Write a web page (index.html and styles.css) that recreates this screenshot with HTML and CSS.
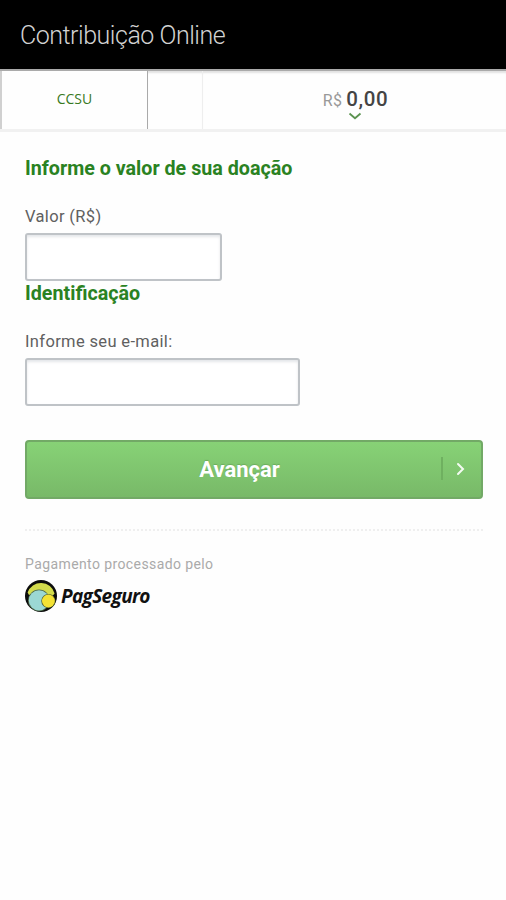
FILE: index.html
```
<!DOCTYPE html>
<html lang="pt-BR">
<head>
    <meta charset="UTF-8">
    <meta name="viewport" content="width=device-width, initial-scale=1.0">
    <title>Contribuição Online</title>
    <link rel="stylesheet" href="styles.css">
</head>
<body>
    <header class="topo">
        <h1>Contribuição Online</h1>
    </header>

    <div class="resumo">
        <div class="loja"><span>CCSU</span></div>
        <div class="espaco"></div>
        <div class="total">
            <div class="preco"><span class="moeda">R$</span> <span class="quantia">0,00</span></div>
            <svg class="seta-baixo" width="14" height="8" viewBox="0 0 14 8">
                <path d="M1.5 1.5 L7 6.2 L12.5 1.5" fill="none" stroke="#5b9350" stroke-width="1.8"/>
            </svg>
        </div>
    </div>

    <form class="conteudo">
        <h2>Informe o valor de sua doação</h2>
        <label class="rotulo-valor" for="valor">Valor (R$)</label>
        <input class="campo campo-valor" type="text" id="valor">

        <h2>Identificação</h2>
        <label class="rotulo-email" for="email">Informe seu e-mail:</label>
        <input class="campo campo-email" type="text" id="email">

        <button class="avancar" type="button">
            <span class="avancar-texto">Avançar</span>
            <span class="avancar-seta">
                <svg width="10" height="14" viewBox="0 0 10 14">
                    <path d="M2 2 L7 7 L2 12" fill="none" stroke="#f4fbf2" stroke-width="2" stroke-linecap="round"/>
                </svg>
            </span>
        </button>
    </form>

    <footer class="rodape">
        <p>Pagamento processado pelo</p>
        <div class="pagseguro">
            <svg width="32" height="32" viewBox="0 0 32 32">
                <circle cx="16" cy="16" r="16" fill="#0c0c0c"/>
                <path d="M2.6 12.5 A14.1 14.1 0 0 1 29.6 13.5 L24 20 L14 12 L4 15 Z" fill="#d3dc4c"/>
                <circle cx="14" cy="20.4" r="10.9" fill="#4f6a4a"/>
                <circle cx="14" cy="20.4" r="10.2" fill="#9bd8d4"/>
                <circle cx="23.4" cy="21" r="7.1" fill="#4d5a2a"/>
                <circle cx="23.4" cy="21" r="6.4" fill="#f4e234"/>
            </svg>
            <span class="pagseguro-nome">PagSeguro</span>
        </div>
    </footer>
</body>
</html>
```

FILE: styles.css
```
* {
    box-sizing: border-box;
}
body {
    margin: 0;
    font-family: Roboto, "Liberation Sans", sans-serif;
    background: #fefefe;
    color: #555;
}
h1, h2, p {
    margin: 0;
}
.topo {
    height: 69px;
    padding-left: 20px;
    background: #000;
}
.topo h1 {
    font-size: 25px;
    font-weight: 300;
    line-height: 71px;
    letter-spacing: -0.48px;
    color: #d2d2d2;
}
.resumo {
    display: flex;
    height: 63px;
    border-top: 2px solid #aaa;
    border-bottom: 3px solid #f1f1f1;
}
.loja {
    display: flex;
    align-items: center;
    justify-content: center;
    width: 148px;
    padding-bottom: 3px;
    border-left: 2px solid #d0d0d0;
    border-right: 1px solid #aaa;
    font-family: "Open Sans", sans-serif;
    font-size: 14px;
    color: #38791f;
}
.espaco {
    width: 55px;
    border-right: 1px solid #eee;
}
.espaco, .total {
    box-shadow: inset 0 3px 2px -1px #e2e2e2;
}
.total {
    flex: 1;
    display: flex;
    flex-direction: column;
    align-items: center;
    padding-top: 16px;
}
.preco {
    height: 24px;
    line-height: 24px;
    padding-left: 2px;
}
.moeda {
    font-size: 16px;
    letter-spacing: 0.3px;
    color: #999;
}
.quantia {
    font-size: 20.5px;
    font-weight: 500;
    letter-spacing: 0.6px;
    color: #444;
}
.seta-baixo {
    margin-top: 1px;
}
.conteudo {
    display: flex;
    flex-direction: column;
    align-items: flex-start;
    padding: 24px 24px 0 25px;
}
.conteudo h2 {
    height: 24px;
    font-size: 19.7px;
    font-weight: 700;
    line-height: 25px;
    color: #2a8222;
}
.conteudo label {
    height: 20px;
    margin-top: 26px;
    margin-bottom: 7px;
    font-size: 16.5px;
    line-height: 21px;
    letter-spacing: 0.35px;
    color: #606060;
}
.campo {
    height: 48px;
    border: 2px solid #bfc3c7;
    border-radius: 3px;
    background: #fff;
    box-shadow: inset 0 2px 3px #e4e6e9;
}
.campo-valor {
    width: 197px;
}
.campo-email {
    width: 275px;
}
.avancar {
    display: flex;
    align-items: center;
    width: 458px;
    height: 59px;
    margin-top: 34px;
    padding: 0;
    border: 2px solid #72a966;
    border-radius: 4px;
    background: linear-gradient(#87d276, #78b968);
    font-family: inherit;
    color: #fff;
}
.avancar-texto {
    flex: 1;
    padding-left: 11px;
    font-size: 22px;
    font-weight: 700;
    text-shadow: 0 -1px 1px rgba(60, 110, 50, 0.3);
}
.avancar-seta {
    display: flex;
    align-items: center;
    justify-content: center;
    width: 40px;
    height: 23px;
    margin-bottom: 2px;
    padding-right: 2px;
    border-left: 2px solid #6fb060;
}
.rodape {
    margin: 30px 23px 0 25px;
    border-top: 2px dotted #efefef;
    padding-top: 22px;
}
.rodape p {
    height: 22px;
    font-size: 14px;
    line-height: 22px;
    letter-spacing: 0.4px;
    color: #aaa;
}
.pagseguro {
    display: flex;
    align-items: center;
    gap: 4px;
    margin-top: 5px;
}
.pagseguro-nome {
    font-family: "Open Sans", sans-serif;
    font-size: 19px;
    font-style: italic;
    font-weight: 700;
    line-height: 32px;
    letter-spacing: -0.65px;
    color: #111;
}
```
